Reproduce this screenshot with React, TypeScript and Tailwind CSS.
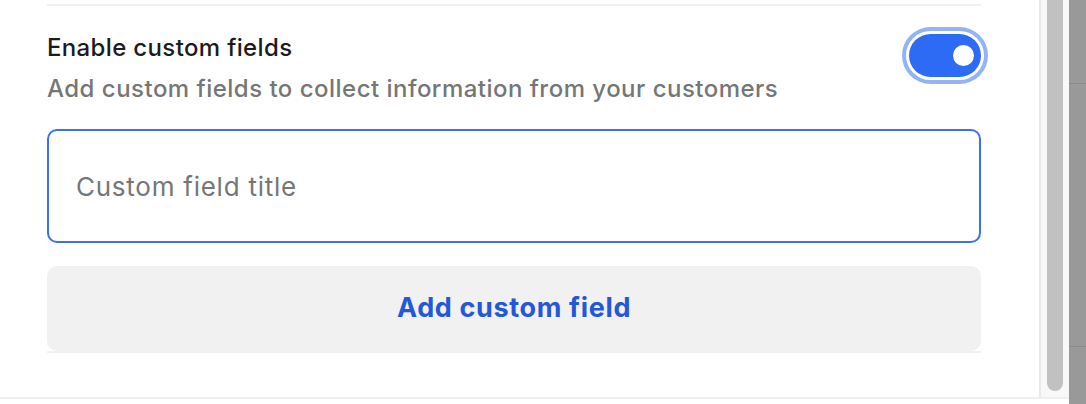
import { useState } from 'react';

function Toggle({ on, onChange }: { on: boolean; onChange: (v: boolean) => void }) {
  return (
    <button
      type="button"
      role="switch"
      aria-checked={on}
      onClick={() => onChange(!on)}
      className="relative mt-[28px] h-[43px] w-[72px] shrink-0 rounded-full bg-[#2d6bf4] shadow-[0_0_0_3px_#ffffff,0_0_0_7px_#93b3f8]"
    >
      <span
        className={
          on
            ? 'absolute top-[11px] right-[7px] h-[21px] w-[21px] rounded-full bg-white'
            : 'absolute top-[11px] left-[7px] h-[21px] w-[21px] rounded-full bg-white'
        }
      />
    </button>
  );
}

export default function App() {
  const [enabled, setEnabled] = useState(true);
  const [title, setTitle] = useState('');

  return (
    <div className="flex h-[404px] w-[1086px] overflow-hidden bg-white font-['Inter','Liberation_Sans',sans-serif]">
      <div className="flex w-[1069px] flex-col">
        <div className="flex h-[397px]">
          {/* settings panel */}
          <div className="w-[1039px] pt-[4px] pr-[58px] pl-[47px]">
            <div className="h-[2px] bg-[#f1f1f1]" />

            <div className="flex items-start justify-between">
              <div className="pt-[27px]">
                <h3 className="text-[24px] leading-[30px] font-medium tracking-[0.35px] text-[#1c1c1c]">
                  Enable custom fields
                </h3>
                <p className="mt-[11px] text-[24px] leading-[30px] font-medium tracking-[0.48px] text-[#767676]">
                  Add custom fields to collect information from your customers
                </p>
              </div>
              <Toggle on={enabled} onChange={setEnabled} />
            </div>

            <input
              value={title}
              onChange={(e) => setTitle(e.target.value)}
              placeholder="Custom field title"
              className="mt-[25px] block h-[114px] w-full rounded-[10px] border-2 border-[#3b71ef] px-[27px] text-[26px] tracking-[0.75px] text-[#1c1c1c] outline-none placeholder:text-[#767676]"
            />

            <button
              type="button"
              className="mt-[23px] flex h-[85px] w-full items-center justify-center rounded-[10px] bg-[#f1f1f1] text-[27px] font-bold tracking-[0.65px] text-[#2358d8]"
            >
              Add custom field
            </button>
            <div className="h-[2px] bg-[#f1f1f1]" />
          </div>

          {/* scrollbar */}
          <div className="w-[2px] bg-[#e9e9e9]" />
          <div className="flex w-[28px] justify-center bg-[#f8f8f8]">
            <div className="h-[391px] w-[16px] rounded-b-full bg-[#c1c1c1]" />
          </div>
        </div>
        <div className="h-[2px] bg-[#efefef]" />
      </div>

      <div className="flex w-[17px] flex-col bg-[#999999]">
        <div className="mt-[83px] h-px bg-[#8b8b8b]" />
        <div className="mt-[262px] h-px bg-[#8b8b8b]" />
      </div>
    </div>
  );
}
